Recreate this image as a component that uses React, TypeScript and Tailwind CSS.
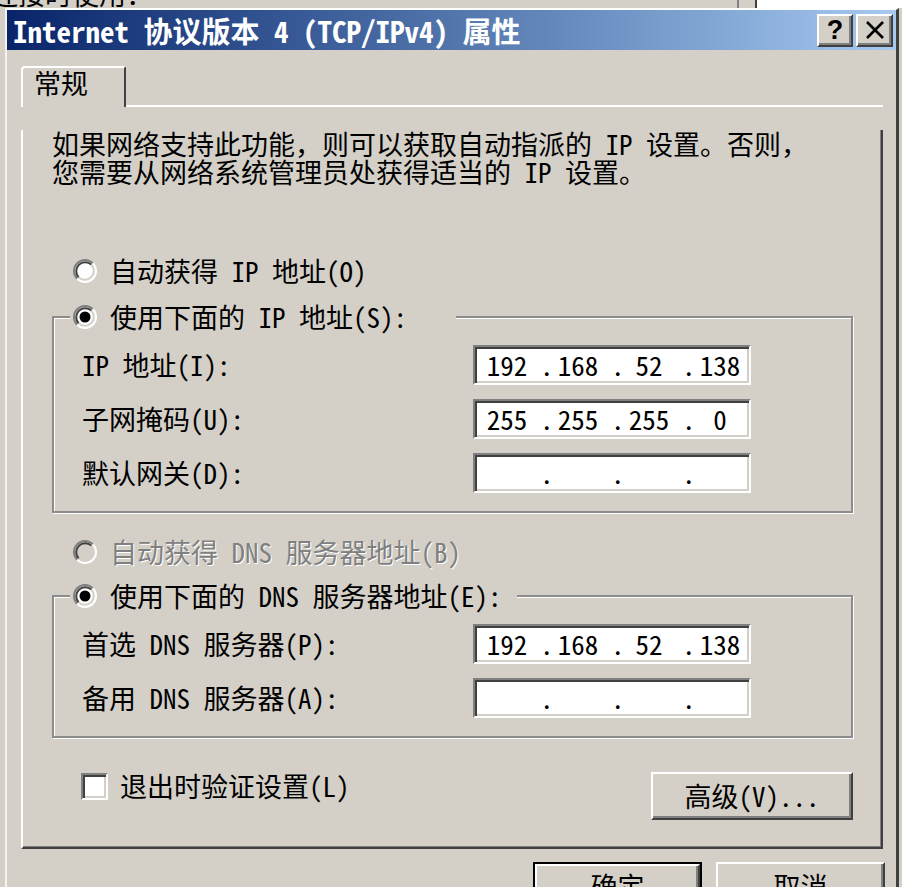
import React from "react";

function Radio({ checked = false, disabled = false }: { checked?: boolean; disabled?: boolean }) {
  return (
    <svg width="24" height="24" viewBox="0 0 24 24" className="shrink-0">
      <circle cx="12" cy="12" r="10" fill={disabled ? "#d4d0c8" : "#ffffff"} />
      <path d="M4.22 19.78A11 11 0 0 1 19.78 4.22" stroke="#808080" strokeWidth="2" fill="none" />
      <path d="M19.78 4.22A11 11 0 0 1 4.22 19.78" stroke="#ffffff" strokeWidth="2" fill="none" />
      <path d="M5.64 18.36A9 9 0 0 1 18.36 5.64" stroke="#404040" strokeWidth="2" fill="none" />
      <path d="M18.36 5.64A9 9 0 0 1 5.64 18.36" stroke="#d4d0c8" strokeWidth="2" fill="none" />
      {checked && <circle cx="12" cy="12" r="5.5" fill="#000000" />}
    </svg>
  );
}

function IpField({ parts }: { parts: string[] }) {
  return (
    <div className="flex h-[40px] w-[278px] shrink-0 items-center border-2 border-t-[#808080] border-l-[#808080] border-r-white border-b-white bg-white pl-[3px] shadow-[inset_2px_2px_0_#404040,inset_-2px_-2px_0_#d4d0c8]">
      {parts.map((p, i) => (
        <React.Fragment key={i}>
          {i > 0 && <span className="w-[13px] shrink-0 whitespace-nowrap pl-[4px]">.</span>}
          <span className="w-[58px] shrink-0 text-center">{p}</span>
        </React.Fragment>
      ))}
    </div>
  );
}

function Row({ label, parts }: { label: string; parts: string[] }) {
  return (
    <div className="flex h-[40px] items-center">
      <span className="w-[391px] shrink-0 whitespace-pre">{label}</span>
      <IpField parts={parts} />
    </div>
  );
}

function Group({ title, width, children }: { title: string; width: string; children: React.ReactNode }) {
  return (
    <fieldset className="border-2 border-[#8c8c8c] shadow-[inset_1px_1px_0_#ffffff,1px_1px_0_#ffffff]">
      <legend className={`ml-[16px] bg-[#d4d0c8] ${width}`}>
        <div className="flex h-[28px] items-center pl-[3px]">
          <Radio checked />
          <span className="ml-[13px] whitespace-pre">{title}</span>
        </div>
      </legend>
      <div className="flex flex-col gap-[14px] pb-[18px] pl-[28px] pt-[14px]">{children}</div>
    </fieldset>
  );
}

function RaisedButton({ children, isDefault = false, className = "" }: { children: React.ReactNode; isDefault?: boolean; className?: string }) {
  const inner = (
    <div className="flex h-full w-full items-center justify-center border-2 border-t-white border-l-white border-r-[#404040] border-b-[#404040] bg-[#d4d0c8] shadow-[inset_-2px_-2px_0_#808080]">
      {children}
    </div>
  );
  if (isDefault) {
    return <div className={`border-2 border-black ${className}`}>{inner}</div>;
  }
  return <div className={className}>{inner}</div>;
}

export default function App() {
  return (
    <div className="relative h-[887px] w-[902px] overflow-hidden bg-[#d4d0c8] font-['Noto_Sans_Mono_CJK_SC','Noto_Sans_CJK_SC',monospace] text-[27px] leading-[28px] text-black">
      {/* strip of the parent window above the dialog */}
      <div className="flex h-[8px] items-end overflow-hidden">
        <span className="-ml-[9px] shrink-0 whitespace-pre">连接时使用：</span>
        <div className="ml-auto flex h-full">
          <div className="h-full w-[20px] border-l-2 border-r-2 border-l-[#808080] border-r-[#404040]" />
          <div className="h-full w-[145px] bg-white" />
        </div>
      </div>

      {/* dialog */}
      <div className="ml-[5px] w-[894px] border-l-2 border-t-2 border-r-[3px] border-l-[#f4f3ef] border-t-white border-r-[#404040]">
        {/* title bar */}
        <div className="flex h-[40px] items-center bg-linear-to-r from-[#0a246a] to-[#a6caf0] pl-[6px] pr-[3px]">
          <span className="whitespace-pre text-[29px] font-bold text-white">Internet 协议版本 4 (TCP/IPv4) 属性</span>
          <div className="ml-auto flex gap-[3px]">
            <RaisedButton className="h-[33px] w-[36px]">
              <span className="font-['Liberation_Sans',sans-serif] text-[27px] font-bold leading-none">?</span>
            </RaisedButton>
            <RaisedButton className="h-[33px] w-[37px]">
              <svg width="20" height="18" viewBox="0 0 20 18">
                <path d="M2 1L18 17M18 1L2 17" stroke="#000" strokeWidth="2.6" fill="none" />
              </svg>
            </RaisedButton>
          </div>
        </div>

        {/* tab strip */}
        <div className="ml-[14px] mr-[13px] mt-[16px] flex h-[41px]">
          <div className="flex w-[105px] rounded-tl-[4px] rounded-tr-[2px] border-l-2 border-t-2 border-r-2 border-l-white border-t-white border-r-[#404040] pl-[11px] pt-[1px]">
            <span>常规</span>
          </div>
          <div className="flex-1 border-b-2 border-white" />
        </div>

        {/* tab panel */}
        <div className="ml-[14px] mr-[13px] border-b-2 border-l-2 border-r-2 border-b-[#404040] border-l-white border-r-[#404040] pb-[27px] pl-[29px] pr-[28px] shadow-[inset_-1px_-1px_0_#808080]">
          <p className="mt-[23px] whitespace-pre">
            {"如果网络支持此功能，则可以获取自动指派的 IP 设置。否则，\n您需要从网络系统管理员处获得适当的 IP 设置。"}
          </p>

          <div className="ml-[21px] mt-[71px] flex h-[28px] items-center">
            <Radio />
            <span className="ml-[13px] whitespace-pre">自动获得 IP 地址(O)</span>
          </div>

          <div className="mt-[18px]">
            <Group title="使用下面的 IP 地址(S):" width="w-[386px]">
              <Row label="IP 地址(I):" parts={["192", "168", "52", "138"]} />
              <Row label="子网掩码(U):" parts={["255", "255", "255", "0"]} />
              <Row label="默认网关(D):" parts={["", "", "", ""]} />
            </Group>
          </div>

          <div className="ml-[21px] mt-[25px] flex h-[28px] items-center text-[#808080]">
            <Radio disabled />
            <span className="ml-[13px] whitespace-pre [text-shadow:1px_1px_0_#ffffff]">自动获得 DNS 服务器地址(B)</span>
          </div>

          <div className="mt-[16px]">
            <Group title="使用下面的 DNS 服务器地址(E):" width="w-[447px]">
              <Row label="首选 DNS 服务器(P):" parts={["192", "168", "52", "138"]} />
              <Row label="备用 DNS 服务器(A):" parts={["", "", "", ""]} />
            </Group>
          </div>

          <div className="mt-[34px] flex items-start">
            <div className="ml-[29px] flex h-[28px] items-center">
              <div className="h-[27px] w-[27px] shrink-0 border-2 border-t-[#808080] border-l-[#808080] border-r-white border-b-white bg-white shadow-[inset_2px_2px_0_#404040,inset_-2px_-2px_0_#d4d0c8]" />
              <span className="ml-[12px] whitespace-pre">退出时验证设置(L)</span>
            </div>
            <RaisedButton className="ml-auto h-[48px] w-[202px]">
              <span className="whitespace-pre">高级(V)...</span>
            </RaisedButton>
          </div>
        </div>

        {/* bottom buttons */}
        <div className="mt-[13px] flex justify-end gap-[14px] pr-[11px]">
          <RaisedButton isDefault className="h-[48px] w-[169px]">
            <span>确定</span>
          </RaisedButton>
          <RaisedButton className="h-[48px] w-[169px]">
            <span>取消</span>
          </RaisedButton>
        </div>
      </div>
    </div>
  );
}
